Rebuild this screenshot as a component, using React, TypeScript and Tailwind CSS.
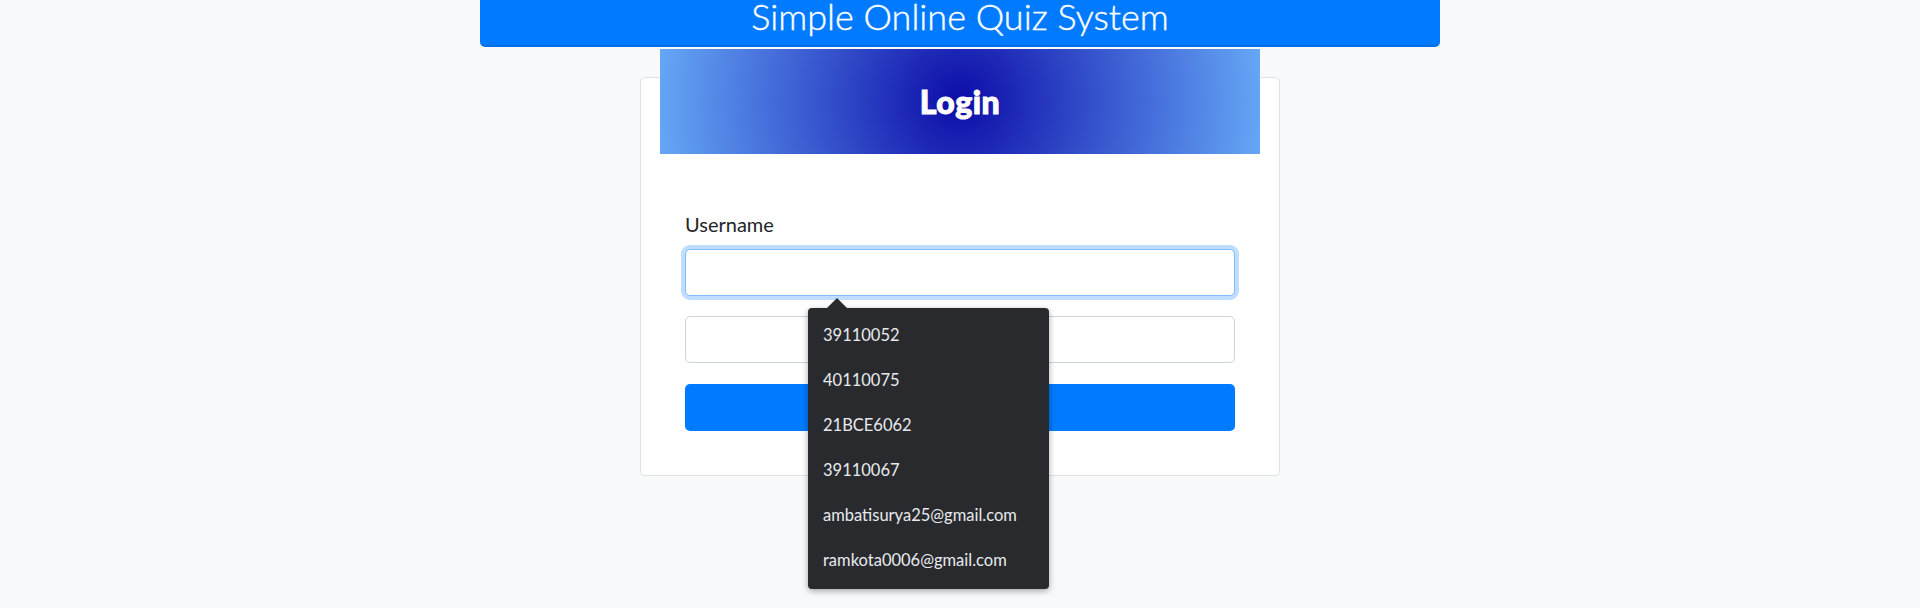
import React from 'react';

const saved = ['39110052', '40110075', '21BCE6062', '39110067', 'ambatisurya25@gmail.com', 'ramkota0006@gmail.com'];

function Suggestions() {
    return (
        <div className="absolute left-[123px] top-[49px] z-10 w-[241px]">
            <svg width="20" height="10" viewBox="0 0 20 10" className="ml-[19px] block">
                <polygon points="0,10 10,0 20,10" fill="#292a2d" />
            </svg>
            <ul className="rounded-[4px] bg-[#292a2d] pt-[5px] pb-[6px] shadow-[0_2px_6px_rgba(0,0,0,0.35)]">
                {saved.map((item) => (
                    <li key={item} className="flex h-[45px] items-center px-[15px] text-[16.5px] text-[#e8eaed]">
                        {item}
                    </li>
                ))}
            </ul>
        </div>
    );
}

export default function App() {
    return (
        <div className="h-[608px] overflow-hidden bg-[#f8f9fa] font-['Lato',sans-serif]">
            <header className="mx-auto flex h-[47px] w-[960px] justify-center rounded-b-[5px] border-b-2 border-[#006ee6] bg-[#007bff]">
                <h1 className="mt-[1px] text-[36px] font-light leading-[30px] text-white [-webkit-text-stroke:0.4px_white]">Simple Online Quiz System</h1>
            </header>

            <div className="mx-auto mt-[30px] w-[640px] rounded-[5px] border border-[#dfe1e3] bg-white">
                <div className="mx-[19px] -mt-[29px] flex h-[105px] items-center justify-center bg-[radial-gradient(circle,#0c0ca7_0%,#3a5ad0_50%,#65a7f6_100%)]">
                    <h2 className="text-[32px] font-black tracking-[0.5px] text-white [-webkit-text-stroke:1px_white]">Login</h2>
                </div>

                <form className="px-[44px] pt-[55px] pb-[44px]">
                    <label className="mb-[10px] block text-[20px] leading-[30px] text-[#212529]">Username</label>
                    <div className="relative">
                        <input
                            type="text"
                            className="block h-[47px] w-full rounded-[5px] border border-[#80bdff] bg-white px-[15px] text-[20px] shadow-[0_0_0_4px_rgba(0,123,255,0.25)] outline-none"
                        />
                        <Suggestions />
                    </div>
                    <input
                        type="password"
                        className="mt-[20px] block h-[47px] w-full rounded-[5px] border border-[#ced4da] bg-white px-[15px] text-[20px] outline-none"
                    />
                    <button type="button" className="mt-[21px] block h-[47px] w-full rounded-[5px] bg-[#007bff]"></button>
                </form>
            </div>
        </div>
    );
}
